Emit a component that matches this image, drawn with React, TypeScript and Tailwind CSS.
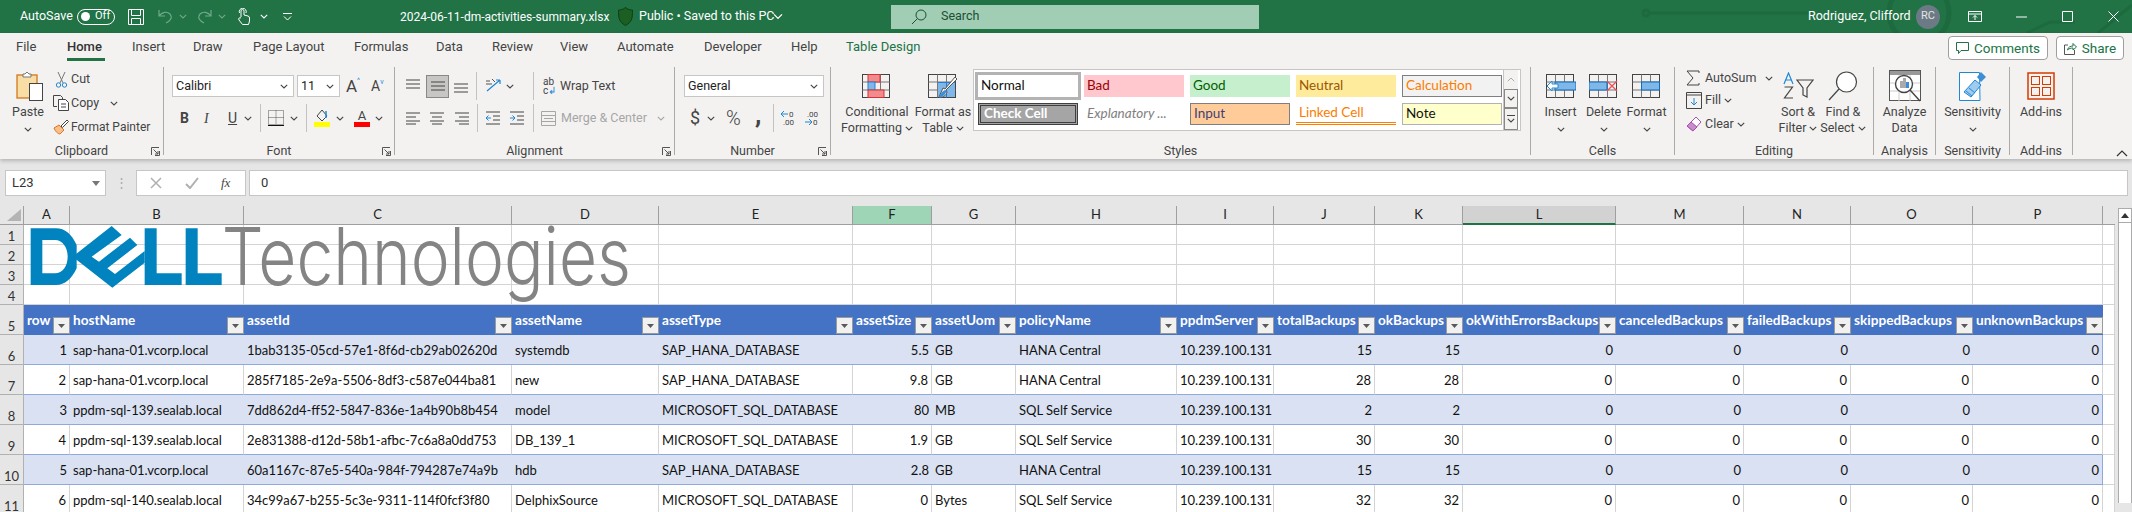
import React from "react";

const Chev = ({ c = "#444", cls = "" }: { c?: string; cls?: string }) => (
  <svg width="8" height="5" viewBox="0 0 8 5" className={"shrink-0 " + cls}><path d="M.8.8 4 4 7.2.8" fill="none" stroke={c} strokeWidth="1.1" /></svg>
);

const Launcher = () => (
  <svg width="9" height="9" viewBox="0 0 9 9" className="absolute right-[3px] bottom-[-1px]"><path d="M.5 8V.5H8M8.5 4v4.5H4M2.5 2.5l4.500 4.500M7 4v3H4" fill="none" stroke="#555" strokeWidth="1" /></svg>
);

function Group({ w, label, launcher, children }: { w: string; label: string; launcher?: boolean; children: React.ReactNode }) {
  return (
    <div className={"relative h-[88px] shrink-0 border-r border-[#adabaa] " + w}>
      <div className="flex h-[76px] w-full">{children}</div>
      <div className="text-center text-[12.5px] leading-[16px] text-[#444] whitespace-nowrap">{label}</div>
      {launcher && <Launcher />}
    </div>
  );
}

function Big({ w, icon, l1, l2, chev }: { w: string; icon: React.ReactNode; l1: string; l2?: string; chev?: boolean }) {
  return (
    <div className={"flex shrink-0 flex-col items-center text-[12.5px] leading-[16px] text-[#444] whitespace-nowrap " + w}>
      <div className="flex h-[37px] items-center justify-center">{icon}</div>
      <div className="h-4">{l1}</div>
      <div className="flex h-4 items-center gap-[3px]">{l2}{chev && <Chev cls={l2 ? "" : "mt-[2px]"} />}</div>
    </div>
  );
}

const Combo = ({ w, text, ml = "" }: { w: string; text: string; ml?: string }) => (
  <div className={"flex h-[22px] shrink-0 items-center justify-between border border-[#c8c6c4] bg-white pl-[3px] pr-[5px] text-[12.5px] text-[#222] " + w + " " + ml}>
    <span>{text}</span><Chev />
  </div>
);

const VLine = ({ h = "h-[24px]" }: { h?: string }) => <div className={"w-px shrink-0 bg-[#c4c2c0] " + h} />;

const Lines = ({ ys, xs }: { ys: number[]; xs: [number, number][] }) => (
  <svg width="16" height="16" viewBox="0 0 16 16" className="shrink-0">
    {ys.map((y, i) => <path key={i} d={`M${xs[i][0]} ${y}H${xs[i][1]}`} stroke="#444" strokeWidth="1" />)}
  </svg>
);

const GridIcon = ({ children, w = 30, h = 24 }: { children?: React.ReactNode; w?: number; h?: number }) => (
  <svg width={w} height={h} viewBox="0 0 30 24" className="shrink-0">
    <rect x=".5" y=".5" width="27" height="23" fill="none" stroke="#444" />
    <path d="M9.500 .5v23M18.500 .5v23M.5 8h27M.5 16h27" stroke="#777" fill="none" />
    {children}
  </svg>
);

const StyleCell = ({ cls, t }: { cls: string; t: string }) => (
  <div className={"flex h-[22px] w-[100px] shrink-0 items-center px-[3px] text-[13.500px] leading-none [font-family:Lato,sans-serif] whitespace-nowrap " + cls}>{t}</div>
);

const GROW = "grid h-[307px] grid-cols-[24px_46px_174px_268px_147px_194px_79px_84px_161px_97px_101px_88px_153px_128px_107px_122px_130px_12px] grid-rows-[19px_20px_20px_20px_20px_30px_30px_30px_30px_30px_30px_30px]";

const COLS = ["A", "B", "C", "D", "E", "F", "G", "H", "I", "J", "K", "L", "M", "N", "O", "P"];
const HEAD = ["row", "hostName", "assetId", "assetName", "assetType", "assetSize", "assetUom", "policyName", "ppdmServer", "totalBackups", "okBackups", "okWithErrorsBackups", "canceledBackups", "failedBackups", "skippedBackups", "unknownBackups"];
const RIGHT = new Set([0, 5, 9, 10, 11, 12, 13, 14, 15]);
const S1 = "sap-hana-01.vcorp.local", S2 = "ppdm-sql-139.sealab.local", H = "SAP_HANA_DATABASE", M = "MICROSOFT_SQL_DATABASE", HC = "HANA Central", SQ = "SQL Self Service", IP = "10.239.100.131";
const DATA = [
  ["1", S1, "1bab3135-05cd-57e1-8f6d-cb29ab02620d", "systemdb", H, "5.5", "GB", HC, IP, "15", "15", "0", "0", "0", "0", "0"],
  ["2", S1, "285f7185-2e9a-5506-8df3-c587e044ba81", "new", H, "9.8", "GB", HC, IP, "28", "28", "0", "0", "0", "0", "0"],
  ["3", S2, "7dd862d4-ff52-5847-836e-1a4b90b8b454", "model", M, "80", "MB", SQ, IP, "2", "2", "0", "0", "0", "0", "0"],
  ["4", S2, "2e831388-d12d-58b1-afbc-7c6a8a0dd753", "DB_139_1", M, "1.9", "GB", SQ, IP, "30", "30", "0", "0", "0", "0", "0"],
  ["5", S1, "60a1167c-87e5-540a-984f-794287e74a9b", "hdb", H, "2.8", "GB", HC, IP, "15", "15", "0", "0", "0", "0", "0"],
  ["6", "ppdm-sql-140.sealab.local", "34c99a67-b255-5c3e-9311-114f0fcf3f80", "DelphixSource", M, "0", "Bytes", SQ, IP, "32", "32", "0", "0", "0", "0", "0"],
];

const RowHead = ({ n }: { n: number }) => (
  <div className="flex items-end justify-center border-r border-b border-[#b1b1b1] bg-[#e6e6e6] text-[13px] leading-[16px] text-[#333] [font-family:Lato,sans-serif]">{n}</div>
);

const FilterBtn = () => (
  <div className="absolute right-0 bottom-[1px] flex h-[17px] w-[17px] items-center justify-center border border-[#9a9a9a] bg-[#f1f1f1]">
    <svg width="7" height="4" viewBox="0 0 7 4"><path d="M0 0h7L3.500 4z" fill="#595959" /></svg>
  </div>
);

export default function App() {
  return (
    <div className="relative h-[512px] w-[2132px] overflow-hidden bg-[#e6e6e6] [font-family:Roboto,sans-serif]">
      {/* title bar */}
      <div className="relative flex h-[33px] items-center overflow-hidden bg-[#217346] text-[12.5px] text-white">
        <svg width="492" height="33" viewBox="0 0 492 33" className="absolute right-0 top-0" fill="none" stroke="#1c6a3e" strokeWidth="3">
          <circle cx="6" cy="13" r="3" />
          <path d="M9 13H172M387 33l23-11h25M458 33l34-28" />
          <circle cx="279" cy="13" r="30" strokeWidth="5" />
        </svg>
        <span className="relative ml-[20px] w-[57px] shrink-0 whitespace-nowrap">AutoSave</span>
        <div className="relative flex h-[16px] w-[38px] shrink-0 items-center rounded-full border border-white pl-[3px] text-[11px]">
          <span className="h-[9px] w-[9px] rounded-full bg-white" /><span className="ml-[5px]">Off</span>
        </div>
        <svg width="16" height="16" viewBox="0 0 16 16" className="relative ml-[13px] shrink-0" fill="none" stroke="#fff"><path d="M.5.5h15v15H.5zM3.500.5v6h9v-6M3.500 15.500v-6h9v6" /></svg>
        <svg width="15" height="15" viewBox="0 0 15 15" className="relative ml-[14px] shrink-0" fill="none" stroke="#6fa98a" strokeWidth="1.200"><path d="M1 1v6h6M1 7c3-4 8-5 11-2 3 4 0 7-4 9" /></svg>
        <Chev c="#6fa98a" cls="relative ml-[6px]" />
        <svg width="15" height="15" viewBox="0 0 15 15" className="relative ml-[10px] shrink-0" fill="none" stroke="#6fa98a" strokeWidth="1.200"><path d="M14 1v6H8M14 7c-3-4-8-5-11-2-3 4 0 7 4 9" /></svg>
        <Chev c="#6fa98a" cls="relative ml-[6px]" />
        <svg width="13" height="17" viewBox="0 0 13 17" className="relative ml-[11px] shrink-0" fill="none" stroke="#fff"><path d="M4 9V3a1.500 1.500 0 0 1 3 0v4l4 1c1 .3 1.500 1 1.500 2v3l-1 3.500h-6L2 12c-1-1.500.5-3 2-2M2.500 5a3.500 3.500 0 1 1 6.500 0" /></svg>
        <Chev c="#fff" cls="relative ml-[10px]" />
        <svg width="9" height="9" viewBox="0 0 9 9" className="relative ml-[15px] shrink-0" fill="none" stroke="#fff"><path d="M0 1.500h9M1 4.500l3.500 3.500L8 4.500" /></svg>
        <span className="relative ml-[108px] w-[218px] shrink-0 whitespace-nowrap text-[12px]">2024-06-11-dm-activities-summary.xlsx</span>
        <svg width="15" height="19" viewBox="0 0 15 19" className="relative shrink-0"><path d="M7.500.5C5 2.500 3 3 .5 3c0 7 0 12 7 15.500 7-3.500 7-8.500 7-15.500-2.500 0-4.500-.5-7-2.500z" fill="#1c5f22" stroke="#103f16" /></svg>
        <span className="relative ml-[6px] w-[133px] shrink-0 whitespace-nowrap">Public • Saved to this PC</span>
        <Chev c="#fff" cls="relative ml-[2px] scale-125" />
        <div className="relative ml-[109px] flex h-[24px] w-[368px] shrink-0 items-center bg-[#a0cdb4] text-[#1d4f33]">
          <svg width="16" height="16" viewBox="0 0 16 16" className="ml-[20px] shrink-0" fill="none" stroke="#1d4f33"><circle cx="10" cy="6" r="5" /><path d="M6.500 9.500 1 15" /></svg>
          <span className="ml-[14px]">Search</span>
        </div>
        <span className="relative ml-[549px] w-[108px] shrink-0 whitespace-nowrap">Rodriguez, Clifford</span>
        <div className="relative flex h-[24px] w-[24px] shrink-0 items-center justify-center rounded-full bg-[#6c7a85] text-[11px] text-[#e5e5e5]">RC</div>
        <svg width="14" height="12" viewBox="0 0 14 12" className="relative ml-[28px] shrink-0" fill="none" stroke="#fff"><path d="M.5.5h13v10H.5zM.5 3h13M7 9V4.500M5 6.500l2-2 2 2" /></svg>
        <svg width="11" height="2" viewBox="0 0 11 2" className="relative ml-[34px] shrink-0"><path d="M0 1h11" stroke="#fff" /></svg>
        <svg width="11" height="11" viewBox="0 0 11 11" className="relative ml-[35px] shrink-0" fill="none" stroke="#fff"><path d="M.5.5h10v10H.5z" /></svg>
        <svg width="11" height="11" viewBox="0 0 11 11" className="relative ml-[35px] shrink-0" fill="none" stroke="#fff"><path d="m.5.5 10 10M10.500.5l-10 10" /></svg>
      </div>

      {/* ribbon */}
      <div className="relative h-[126px] bg-[#f3f2f1] shadow-[0_2px_4px_rgba(0,0,0,0.22)]">
        <div className="relative flex h-[34px] items-start pl-[16px] pt-[5px] text-[13px] leading-[18px] text-[#444]">
          <span className="w-[51px]">File</span>
          <span className="relative w-[65px] font-medium text-[#333]">Home<span className="absolute left-0 top-[20px] h-[3px] w-[38px] bg-[#217346]" /></span>
          <span className="w-[61px]">Insert</span>
          <span className="w-[60px]">Draw</span>
          <span className="w-[101px]">Page Layout</span>
          <span className="w-[82px]">Formulas</span>
          <span className="w-[56px]">Data</span>
          <span className="w-[68px]">Review</span>
          <span className="w-[57px]">View</span>
          <span className="w-[87px]">Automate</span>
          <span className="w-[87px]">Developer</span>
          <span className="w-[55px]">Help</span>
          <span className="text-[#217346]">Table Design</span>
          <div className="absolute left-[1948px] top-[3px] flex h-[24px] w-[100px] items-center justify-center gap-[5px] rounded-[4px] border border-[#a19f9d] bg-white text-[13.5px] text-[#217346]">
            <svg width="13" height="13" viewBox="0 0 13 13" fill="none" stroke="#217346"><path d="M.5.5h12v8H5l-2.500 3v-3h-2z" /></svg>Comments
          </div>
          <div className="absolute left-[2056px] top-[3px] flex h-[24px] w-[68px] items-center justify-center gap-[5px] rounded-[4px] border border-[#a19f9d] bg-white text-[13.5px] text-[#217346]">
            <svg width="13" height="14" viewBox="0 0 13 14" fill="none" stroke="#555"><path d="M4 4H.5v9.500h10V9" /><path d="M3.500 9c.5-3 3-4 5.500-4V2.500L12.500 6 9 9V7C7 7 5 7.500 3.500 9z" stroke="#217346" /></svg>Share
          </div>
        </div>
        <div className="relative flex">
          {/* Clipboard */}
          <Group w="w-[164px]" label="Clipboard" launcher>
            <Big w="w-[50px] ml-[3px]" l1="Paste" chev icon={
              <svg width="28" height="30" viewBox="0 0 28 30" className="ml-[4px]"><rect x="1" y="4" width="20" height="23" fill="#f8dea5" stroke="#d0771d" strokeWidth="1.300" /><path d="M7 6V3h2l2-2 2 2h2v3z" fill="#fff" stroke="#777" /><rect x="13.500" y="12.500" width="13" height="17" fill="#fff" stroke="#444" /></svg>
            } />
            <div className="flex flex-col text-[12.5px] text-[#444]">
              <div className="flex h-[24px] items-center pt-[1px]">
                <svg width="13" height="16" viewBox="0 0 13 16" className="mr-[3px] ml-[2px]" fill="none"><path d="M3 0l5 11M10 0 5 11" stroke="#777" /><circle cx="3.500" cy="13" r="2.200" stroke="#1e88d6" /><circle cx="9.500" cy="13" r="2.200" stroke="#1e88d6" /></svg>Cut
              </div>
              <div className="flex h-[24px] items-center">
                <svg width="17" height="16" viewBox="0 0 17 16" className="mr-[1px]" fill="none" stroke="#444"><path d="M4 11.500H.5V.5h7l2 2v2" /><path d="M5.500 4.500h7l3 3v8h-10zM8 9h5M8 12h5" fill="#fff" /></svg>Copy<Chev cls="ml-[11px]" />
              </div>
              <div className="flex h-[24px] items-center whitespace-nowrap text-[12px]">
                <svg width="16" height="16" viewBox="0 0 16 16" className="mr-[2px]"><path d="M1 9 6 6l5 5-4 4C5 15 2 12 1 9z" fill="#f7c089" stroke="#d9742a" /><path d="m8 7 6-6 1.500 1.500-6 6z" fill="#fff" stroke="#444" /></svg>Format Painter
              </div>
            </div>
          </Group>

          {/* Font */}
          <Group w="w-[231px]" label="Font" launcher>
            <div className="flex flex-col pl-[8px] pt-[8px]">
              <div className="flex items-center">
                <Combo w="w-[122px]" text="Calibri" />
                <Combo w="w-[43px]" ml="ml-[3px]" text="11" />
                <span className="ml-[6px] flex w-[25px] items-start text-[17px] leading-none text-[#444]">A<span className="text-[7px] leading-none text-[#1e88d6]">^</span></span>
                <span className="flex w-[16px] items-start text-[14px] leading-none text-[#444]">A<span className="text-[7px] leading-none text-[#1e88d6]">v</span></span>
              </div>
              <div className="mt-[9px] flex h-[24px] items-center text-[14px] text-[#444]">
                <span className="ml-[8px] w-[24px] font-bold">B</span>
                <span className="w-[24px] italic [font-family:'Liberation_Serif',serif]">I</span>
                <span className="w-[16px] underline">U</span><Chev />
                <VLine h="h-[28px] ml-[8px]" />
                <svg width="16" height="16" viewBox="0 0 16 16" className="ml-[7px]" fill="none" stroke="#555" strokeDasharray="1 1"><path d="M.5.5h15v14H.5zM8 .5v14M.5 7.500h15" /><path d="M0 15.500h16" stroke="#111" strokeDasharray="none" /></svg>
                <Chev cls="ml-[6px]" />
                <VLine h="h-[28px] ml-[8px]" />
                <div className="ml-[7px] flex w-[16px] flex-col items-center">
                  <svg width="14" height="13" viewBox="0 0 14 13" fill="none"><path d="M2 7l5-6 5 6-5 5z" stroke="#444" /><path d="M11 2v7" stroke="#1e88d6" strokeWidth="1.500" /></svg>
                  <span className="h-[5px] w-[16px] bg-[#ffff00]" />
                </div>
                <Chev cls="ml-[6px]" />
                <div className="ml-[10px] flex w-[16px] flex-col items-center leading-[13px]">
                  <span className="h-[13px] text-[13px] text-[#444]">A</span>
                  <span className="h-[5px] w-[16px] bg-[#ff0000]" />
                </div>
                <Chev cls="ml-[5px]" />
              </div>
            </div>
          </Group>

          {/* Alignment */}
          <Group w="w-[280px]" label="Alignment" launcher>
            <div className="flex flex-col pl-[10px] pt-[8px]">
              <div className="flex h-[22px] items-center">
                <Lines ys={[2, 6, 10]} xs={[[1, 15], [1, 15], [1, 15]]} />
                <div className="ml-[5px] flex h-[23px] w-[23px] items-center justify-center border border-[#8a8886] bg-[#c8c6c4]"><Lines ys={[4, 8, 12]} xs={[[1, 15], [1, 15], [1, 15]]} /></div>
                <div className="ml-[4px]"><Lines ys={[6, 10, 14]} xs={[[1, 15], [1, 15], [1, 15]]} /></div>
                <VLine h="h-[28px] ml-[7px]" />
                <svg width="20" height="20" viewBox="0 0 20 20" className="ml-[7px]" fill="none"><path d="M3 15 16 4M16 4h-4M16 4v4" stroke="#1e88d6" strokeWidth="1.200" /><path d="M2 5h4M2 8h6M8 3l3 3" stroke="#555" /></svg>
                <Chev cls="ml-[2px]" />
                <VLine h="h-[28px] ml-[19px]" />
                <span className="ml-[9px] w-[17px] text-[10px] leading-[9px] text-[#444]">ab<br />c<span className="text-[#1e88d6]">↲</span></span>
                <span className="text-[12.5px] text-[#444]">Wrap Text</span>
              </div>
              <div className="mt-[9px] flex h-[24px] items-center">
                <Lines ys={[3, 7, 11, 14]} xs={[[1, 15], [1, 11], [1, 15], [1, 11]]} />
                <div className="ml-[8px]"><Lines ys={[3, 7, 11, 14]} xs={[[1, 15], [3, 13], [1, 15], [3, 13]]} /></div>
                <div className="ml-[9px]"><Lines ys={[3, 7, 11, 14]} xs={[[1, 15], [5, 15], [1, 15], [5, 15]]} /></div>
                <VLine h="h-[28px] ml-[7px]" />
                <svg width="16" height="14" viewBox="0 0 16 14" className="ml-[7px]" fill="none"><path d="M1 1h14M8 5h7M8 9h7M1 13h14" stroke="#444" /><path d="M6 7H1M3.500 4.500 1 7l2.500 2.500" stroke="#1e88d6" /></svg>
                <svg width="16" height="14" viewBox="0 0 16 14" className="ml-[8px]" fill="none"><path d="M1 1h14M8 5h7M8 9h7M1 13h14" stroke="#444" /><path d="M1 7h5M3.500 4.500 6 7 3.500 9.500" stroke="#1e88d6" /></svg>
                <VLine h="h-[28px] ml-[8px]" />
                <svg width="15" height="15" viewBox="0 0 15 15" className="ml-[7px]" fill="none" stroke="#a6a6a6"><path d="M.5.5h14v14H.5zM.5 4.500h14M.5 10.500h14M3 7.500h9" /></svg>
                <span className="ml-[5px] w-[96px] whitespace-nowrap text-[12.5px] text-[#a6a6a6]">Merge &amp; Center</span>
                <Chev c="#a6a6a6" />
              </div>
            </div>
          </Group>

          {/* Number */}
          <Group w="w-[156px]" label="Number" launcher>
            <div className="flex flex-col pl-[9px] pt-[8px]">
              <Combo w="w-[140px]" text="General" />
              <div className="mt-[9px] flex h-[24px] items-center text-[#444]">
                <span className="ml-[6px] w-[17px] text-[18px] leading-none">$</span><Chev />
                <span className="ml-[11px] w-[26px] text-[20px] font-light leading-none">%</span>
                <span className="ml-[3px] w-[18px] text-[26px] font-bold leading-none pb-[8px]">,</span>
                <VLine h="h-[28px]" />
                <svg width="18" height="16" viewBox="0 0 18 16" className="ml-[6px]" fill="none"><path d="M8 4H1M4 1 1 4l3 3" stroke="#1e88d6" /><text x="9" y="7" fontSize="8" fill="#444" stroke="none">0</text><text x="3" y="15" fontSize="8" fill="#444" stroke="none">.00</text></svg>
                <svg width="18" height="16" viewBox="0 0 18 16" className="ml-[6px]" fill="none"><path d="M1 12h7M5 9l3 3-3 3" stroke="#1e88d6" /><text x="3" y="7" fontSize="8" fill="#444" stroke="none">.00</text><text x="9" y="15" fontSize="8" fill="#444" stroke="none">0</text></svg>
              </div>
            </div>
          </Group>

          {/* Styles */}
          <Group w="w-[700px]" label="Styles">
            <Big w="w-[76px] ml-[8px]" l1="Conditional" l2="Formatting" chev icon={
              <GridIcon><rect x="6" y=".5" width="12" height="7.500" fill="#f28b8b" stroke="#d13438" /><rect x="6" y="8" width="7" height="8" fill="#7fb8e8" stroke="#2b7cd3" /><rect x="6" y="16" width="16" height="7.500" fill="#f28b8b" stroke="#d13438" /></GridIcon>
            } />
            <Big w="w-[56px]" l1="Format as" l2="Table" chev icon={
              <GridIcon w={30} h={24}><rect x="10" y="8" width="17" height="15" fill="#7fb8e8" /><path d="M10 8.500h17M18.500 8v15" stroke="#2b7cd3" /><path d="M27 3 17 15l-2-1-4 9c3 1 7-1 8-5l-1-2L29 5z" fill="#fff" stroke="#555" /><path d="M11 23c2-4 4-7 7-7 1 3-3 8-7 7z" fill="#3c8fd4" /></GridIcon>
            } />
            <div className="ml-[2px] mt-[2px] flex h-[62px] w-[548px] shrink-0 border border-[#c8c6c4] bg-white">
              <div className="flex w-[529px] flex-col gap-[6px] pl-[4px] pt-[5px]">
                <div className="flex gap-[6px]">
                  <StyleCell cls="bg-white text-[#111] outline-[3px] outline-[#b3b3b3]" t="Normal" />
                  <StyleCell cls="bg-[#ffc7ce] text-[#9c0006]" t="Bad" />
                  <StyleCell cls="bg-[#c6efce] text-[#006100]" t="Good" />
                  <StyleCell cls="bg-[#ffeb9c] text-[#9c5700]" t="Neutral" />
                  <StyleCell cls="border border-[#7f7f7f] bg-[#f2f2f2] text-[#fa7d00]" t="Calculation" />
                </div>
                <div className="flex gap-[6px]">
                  <StyleCell cls="border-[3px] border-double border-[#3f3f3f] bg-[#a5a5a5] font-bold text-white" t="Check Cell" />
                  <StyleCell cls="italic text-[#7f7f7f]" t="Explanatory ..." />
                  <StyleCell cls="border border-[#7f7f7f] bg-[#ffcc99] text-[#3f3f76]" t="Input" />
                  <StyleCell cls="border-b-[3px] border-double border-[#ff8001] text-[#fa7d00]" t="Linked Cell" />
                  <StyleCell cls="border border-[#b2b2b2] bg-[#ffffcc] text-[#111]" t="Note" />
                </div>
              </div>
              <div className="flex w-[15px] flex-col border-l border-[#c8c6c4] text-[#555]">
                <div className="flex h-[19px] items-center justify-center bg-[#f3f2f1]"><svg width="8" height="5" viewBox="0 0 8 5"><path d="M.8 4.200 4 1l3.200 3.200" fill="none" stroke="#aaa" /></svg></div>
                <div className="flex h-[19px] items-center justify-center border border-[#8a8886] bg-[#f3f2f1]"><Chev /></div>
                <div className="flex h-[22px] flex-col items-center justify-center gap-[2px] border border-[#8a8886] bg-[#f3f2f1]"><span className="h-px w-[8px] bg-[#444]" /><Chev /></div>
              </div>
            </div>
          </Group>

          {/* Cells */}
          <Group w="w-[144px]" label="Cells">
            <div className="w-[8px] shrink-0" />
            <Big w="w-[43px]" l1="Insert" chev icon={
              <GridIcon w={30} h={24}><rect x="9" y="8" width="21" height="8" fill="#7fb8e8" stroke="#0f6cbd" /><path d="M1 12 6 7v3h6v4H6v3z" fill="#fff" stroke="#1e88d6" /></GridIcon>
            } />
            <Big w="w-[43px]" l1="Delete" chev icon={
              <GridIcon w={30} h={24}><rect x="0" y="8" width="18" height="8" fill="#7fb8e8" stroke="#0f6cbd" /><path d="m18 7 10 10M28 7 18 17" stroke="#e9515a" strokeWidth="1.400" /></GridIcon>
            } />
            <Big w="w-[43px]" l1="Format" chev icon={
              <GridIcon w={30} h={24}><rect x="9.500" y="8" width="18" height="8" fill="#7fb8e8" stroke="#0f6cbd" /></GridIcon>
            } />
          </Group>

          {/* Editing */}
          <Group w="w-[199px]" label="Editing">
            <div className="flex w-[101px] shrink-0 flex-col pl-[11px] text-[12.5px] text-[#444]">
              <div className="flex h-[22px] items-center whitespace-nowrap">
                <svg width="14" height="16" viewBox="0 0 14 16" className="mr-[5px]" fill="none" stroke="#444"><path d="M13 3V1H1l6 7-6 7h12v-2" /></svg>AutoSum<Chev cls="ml-[9px]" />
              </div>
              <div className="flex h-[23px] items-center">
                <svg width="16" height="17" viewBox="0 0 16 17" className="mr-[3px]" fill="none"><path d="M.5.5h15v16H.5z" stroke="#444" /><path d="M.5 3h15" stroke="#444" /><path d="M8 6v7M5 10l3 3 3-3" stroke="#1e88d6" /></svg>Fill<Chev cls="ml-[3px]" />
              </div>
              <div className="flex h-[25px] items-center">
                <svg width="16" height="17" viewBox="0 0 16 17" className="mr-[3px]"><path d="M10 1l5 5-8 9-6-5z" fill="#fff" stroke="#a94fb0" /><path d="M5 6l6 5-4 4-6-5z" fill="#c88ccd" stroke="#a94fb0" /></svg>Clear<Chev cls="ml-[3px]" />
              </div>
            </div>
            <Big w="w-[44px]" l1="Sort &" l2="Filter" chev icon={
              <svg width="31" height="27" viewBox="0 0 31 27" fill="none"><path d="M1 12 5.500 1 10 12M2.800 8h5.500" stroke="#1e88d6" strokeWidth="1.200" /><path d="M1.500 15h8l-8 11h8.500" stroke="#444" strokeWidth="1.200" /><path d="M14 8h16l-6 8v9l-4-2v-7z" stroke="#444" strokeWidth="1.200" /></svg>
            } />
            <Big w="w-[46px]" l1="Find &" l2="Select" chev icon={
              <svg width="30" height="30" viewBox="0 0 30 30" fill="none" stroke="#444" strokeWidth="1.200"><circle cx="18.500" cy="11" r="10" fill="#fff" /><path d="M11 18 1 29" /></svg>
            } />
          </Group>

          {/* Analysis */}
          <Group w="w-[62px]" label="Analysis">
            <Big w="w-full" l1="Analyze" l2="Data" icon={
              <svg width="32" height="32" viewBox="0 0 32 32" fill="none"><rect x=".5" y=".5" width="31" height="30" fill="#fff" stroke="#555" /><rect x="1" y="1" width="30" height="4" fill="#999" /><path d="M1 13h30M1 21h30M10 5v26M21 5v26" stroke="#ccc" /><circle cx="15" cy="14" r="8.500" fill="#fff" stroke="#444" strokeWidth="1.400" /><path d="M11 11h3v7h-3zM14 8h3v10h-3z" fill="#aaa" /><path d="M17 12h3v6h-3z" fill="#3c8fd4" /><path d="m21 20 10 11" stroke="#444" strokeWidth="1.400" /></svg>
            } />
          </Group>

          {/* Sensitivity */}
          <Group w="w-[74px]" label="Sensitivity">
            <Big w="w-full" l1="Sensitivity" chev icon={
              <svg width="28" height="30" viewBox="0 0 28 30" fill="none"><path d="M.5 1.500h20l.5 28H.5z" fill="#fff" stroke="#1e88d6" /><path d="M5 21 16 9l6 5-10 12z" fill="#9fcbee" stroke="#1e88d6" /><path d="M7 20l6 5M10 17l6 5" stroke="#1e88d6" /><path d="m18 6 4-5 5 5-5 5z" fill="#3c8fd4" /></svg>
            } />
          </Group>

          {/* Add-ins */}
          <Group w="w-[63px]" label="Add-ins">
            <Big w="w-full" l1="Add-ins" icon={
              <svg width="28" height="28" viewBox="0 0 28 28" fill="none" stroke="#d83b01"><rect x="1" y="1" width="26" height="26" strokeWidth="1.500" /><rect x="4.500" y="4.500" width="8" height="8" /><rect x="15.500" y="4.500" width="8" height="8" /><rect x="4.500" y="15.500" width="8" height="8" /><rect x="15.500" y="15.500" width="8" height="8" /></svg>
            } />
          </Group>
          <svg width="12" height="7" viewBox="0 0 12 7" className="ml-[43px] mt-[83px] shrink-0"><path d="M1 6 6 1l5 5" fill="none" stroke="#333" strokeWidth="1.200" /></svg>
        </div>
      </div>

      {/* formula bar */}
      <div className="flex h-[47px] items-start pl-[5px] pt-[11px] text-[13px] text-[#333]">
        <div className="flex h-[26px] w-[101px] shrink-0 items-center justify-between border border-[#c8c6c4] bg-white pl-[6px] pr-[5px]">
          L23<svg width="8" height="5" viewBox="0 0 8 5"><path d="M0 0h8L4 5z" fill="#777" /></svg>
        </div>
        <div className="flex h-[26px] w-[30px] shrink-0 items-center justify-center text-[#aaa] tracking-tighter">⋮</div>
        <div className="flex h-[26px] w-[110px] shrink-0 items-center border border-[#c8c6c4] bg-white pl-[13px]">
          <svg width="12" height="12" viewBox="0 0 12 12" fill="none" stroke="#b0b0b0" strokeWidth="1.500"><path d="m1 1 10 10M11 1 1 11" /></svg>
          <svg width="14" height="12" viewBox="0 0 14 12" className="ml-[23px]" fill="none" stroke="#b0b0b0" strokeWidth="2"><path d="m1 7 4 4 8-10" /></svg>
          <span className="ml-[22px] pr-[2px] italic text-[#444] [font-family:'Liberation_Serif',serif]">fx</span>
        </div>
        <div className="ml-[3px] flex h-[26px] w-[1879px] shrink-0 items-center border border-[#c8c6c4] bg-white pl-[11px]">0</div>
      </div>

      {/* sheet */}
      <div className="flex">
        <div className="relative w-[2115px] shrink-0">
          <div className={GROW}>
            <div className="flex items-end justify-end border-r border-b border-[#9f9f9f] bg-[#e6e6e6] pb-[3px] pr-[2px]">
              <svg width="14" height="12" viewBox="0 0 14 12"><path d="M14 0v12H0z" fill="#b4b4b4" /></svg>
            </div>
            {COLS.map((c) => (
              <div key={c} className={"flex items-center justify-center border-r border-b text-[13px] text-[#222] [font-family:Lato,sans-serif] " + (c === "F" ? "border-[#9f9f9f] bg-[#9fd5b7]" : c === "L" ? "border-r-[#9f9f9f] border-b-2 border-b-[#217346] bg-[#d2d2d2]" : "border-[#9f9f9f] bg-[#e6e6e6]")}>{c}</div>
            ))}
            <div className="border-b border-[#9f9f9f] bg-[#e6e6e6]" />
            {[1, 2, 3, 4].map((r) => (
              <React.Fragment key={r}>
                <RowHead n={r} />
                {COLS.map((c) => <div key={c} className="border-r border-b border-[#d4d4d4] bg-white" />)}
                <div className="border-r border-b border-[#d4d4d4] bg-white" />
              </React.Fragment>
            ))}
            <RowHead n={5} />
            {HEAD.map((h) => (
              <div key={h} className="relative flex items-center bg-[#4472c4] pl-[3px] pt-[3px] text-[13.6px] font-bold text-white whitespace-nowrap [font-family:Lato,sans-serif]">
                <span className="pb-[3px]">{h}</span><FilterBtn />
              </div>
            ))}
            <div className="border-r border-b border-[#d4d4d4] bg-white" />
            {DATA.map((row, i) => (
              <React.Fragment key={i}>
                <RowHead n={i + 6} />
                {row.map((v, j) => (
                  <div key={j} className={"flex items-center overflow-hidden whitespace-nowrap pt-[3px] text-[13px] text-[#111] [font-family:Lato,sans-serif] border-b border-[#8ea9db] px-[3px] " + (RIGHT.has(j) ? "justify-end " : "") + (i % 2 === 0 ? "bg-[#d9e1f2] " : "bg-white border-r-[#d4d4d4] border-r ") + (j === 15 ? "border-r border-r-[#8ea9db]" : "")}>{v}</div>
                ))}
                <div className="border-r border-b border-[#d4d4d4] bg-white" />
              </React.Fragment>
            ))}
          </div>
          <svg role="img" aria-label="Dell Technologies" width="620" height="85" viewBox="0 0 1860 255" className="absolute left-[20px] top-[19px]">
            <g fill="#0083bf">
              <path fillRule="evenodd" d="M32 10H108C135 10 155 28 170 60V130C155 162 135 180 108 180H32ZM67 45V145H105C128 145 143 122 143 95 143 68 128 45 105 45Z" />
              <path d="M275 3 305 30 215 95 237 110 330 38 352 60 262 130 285 147 374 78V113L277 188 158 95Z" />
              <path d="M374 10H410V145H485V180H374Z" />
              <path d="M497 10H533V145H605V180H497Z" />
            </g>
            <text x="605" y="180" fontSize="240" fontWeight="300" fill="#848484" textLength="1228" lengthAdjust="spacingAndGlyphs" fontFamily="Inter, sans-serif">Technologies</text>
          </svg>
        </div>
        <div className="ml-[3px] flex w-[14px] shrink-0 flex-col pt-[2px]">
          <div className="flex h-[15px] items-center justify-center border border-[#ababab] bg-white"><svg width="8" height="5" viewBox="0 0 8 5"><path d="M4 0l4 5H0z" fill="#333" /></svg></div>
          <div className="h-[280px] border-x border-[#ababab] bg-white" />
        </div>
      </div>
    </div>
  );
}
